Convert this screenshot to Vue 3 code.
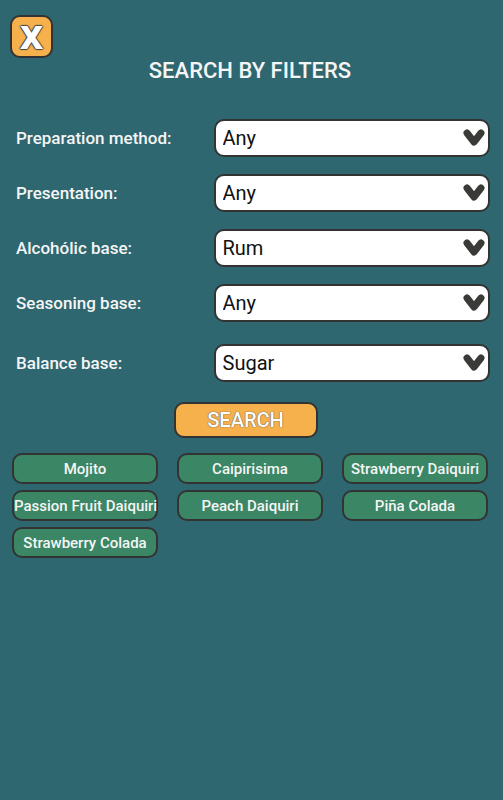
<template>
  <main class="search-page">
    <button class="close" type="button" aria-label="Close">X</button>
    <h1 class="title">SEARCH BY FILTERS</h1>

    <form class="filters" @submit.prevent>
      <div v-for="filter in filters" :key="filter.id" class="filter" :class="filter.id">
        <label :for="filter.id">{{ filter.label }}</label>
        <div class="select-wrap">
          <select :id="filter.id" v-model="filter.value">
            <option v-for="option in filter.options" :key="option">{{ option }}</option>
          </select>
          <svg class="arrow" viewBox="0 0 22 18" aria-hidden="true">
            <path d="M4 4 L11 13 L18 4" />
          </svg>
        </div>
      </div>
      <button class="search" type="submit">SEARCH</button>
    </form>

    <div class="results">
      <button v-for="drink in drinks" :key="drink" class="drink" type="button">{{ drink }}</button>
    </div>
  </main>
</template>

<script setup>
import { ref } from 'vue'

const filters = ref([
  { id: 'preparation', label: 'Preparation method:', value: 'Any', options: ['Any'] },
  { id: 'presentation', label: 'Presentation:', value: 'Any', options: ['Any'] },
  { id: 'alcoholic', label: 'Alcohólic base:', value: 'Rum', options: ['Any', 'Rum'] },
  { id: 'seasoning', label: 'Seasoning base:', value: 'Any', options: ['Any'] },
  { id: 'balance', label: 'Balance base:', value: 'Sugar', options: ['Any', 'Sugar'] },
])

const drinks = [
  'Mojito',
  'Caipirisima',
  'Strawberry Daiquiri',
  'Passion Fruit Daiquiri',
  'Peach Daiquiri',
  'Piña Colada',
  'Strawberry Colada',
]
</script>

<style>
body {
  margin: 0;
  background: #2e6770;
}
</style>

<style scoped>
.search-page {
  box-sizing: border-box;
  min-height: 100vh;
  padding: 15px 13px 24px 10px;
  background: #2e6770;
  color: #f5f5f5;
  font-family: Roboto, "Liberation Sans", sans-serif;
  font-weight: 500;
}

button,
select {
  box-sizing: border-box;
  margin: 0;
  border: 2px solid #333;
  border-radius: 10px;
  font-family: inherit;
}

.close {
  display: block;
  width: 43px;
  height: 43px;
  padding: 0;
  background: #f7b14c;
  color: #fff;
  font-family: "Open Sans", sans-serif;
  font-size: 32px;
  font-weight: 800;
  line-height: 38px;
  text-shadow: 1px 0 1px #444, -1px 0 1px #444, 0 1px 1px #444, 0 -1px 1px #444;
}

.title {
  margin: 0;
  font-size: 22px;
  font-weight: 500;
  line-height: 26px;
  text-align: center;
}

.filters {
  display: flex;
  flex-direction: column;
  gap: 17px;
  margin-top: 35px;
  padding-left: 6px;
}

.filter {
  display: grid;
  grid-template-columns: 5fr 7fr;
  align-items: center;
  font-size: 17px;
}

.filter.balance {
  margin-top: 5px;
}

.select-wrap {
  position: relative;
}

select {
  display: block;
  width: 100%;
  height: 38px;
  padding: 0 32px 0 7px;
  appearance: none;
  background: #fff;
  color: #111;
  font-size: 20px;
  font-weight: 400;
}

.arrow {
  position: absolute;
  top: 10px;
  right: 5px;
  width: 22px;
  height: 18px;
  fill: none;
  stroke: #3a3a38;
  stroke-width: 7;
  stroke-linecap: round;
  stroke-linejoin: round;
  pointer-events: none;
}

.search {
  align-self: center;
  width: 144px;
  height: 36px;
  margin-top: 3px;
  margin-right: 15px;
  padding: 0;
  background: #f7b14c;
  color: #fff;
  font-size: 20px;
  font-weight: 500;
  text-shadow: 0 0 1px #555, 0 0 1px #555;
}

.results {
  display: grid;
  grid-template-columns: repeat(3, minmax(0, 1fr));
  gap: 6px 19px;
  margin: 15px 2px 0;
}

.drink {
  height: 31px;
  padding: 0;
  background: #3a8665;
  color: #f5f5f5;
  font-size: 15px;
  font-weight: 500;
  white-space: nowrap;
}
</style>
